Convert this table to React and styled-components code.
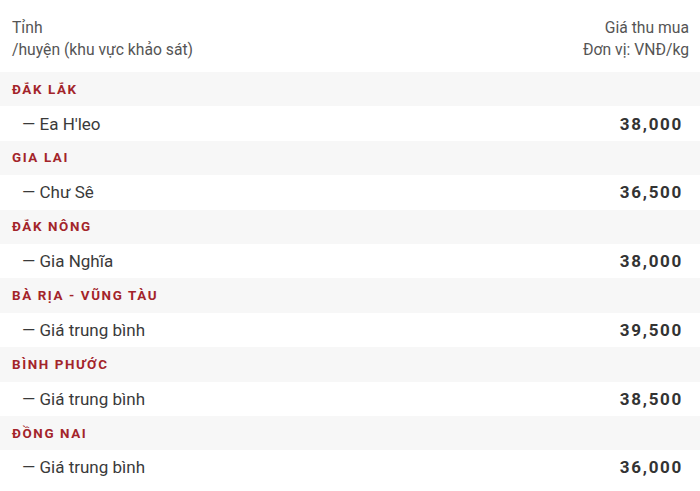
import styled, { createGlobalStyle } from "styled-components";

const GlobalStyle = createGlobalStyle`
  body {
    margin: 0;
    background: #fff;
    font-family: Roboto, "Liberation Sans", Arial, sans-serif;
  }
`;

const Table = styled.div`
  width: 700px;
`;

const Header = styled.div`
  display: flex;
  justify-content: space-between;
  align-items: flex-start;
  height: 72px;
  padding: 17px 11px 0 12px;
  box-sizing: border-box;
  font-size: 15.7px;
  line-height: 22px;
  color: #555;
`;

const HeaderCell = styled.div`
  text-align: ${(p) => (p.right ? "right" : "left")};
`;

const ProvinceRow = styled.div`
  display: flex;
  align-items: center;
  height: 34.4px;
  padding-left: 12px;
  background: #f7f7f7;
  color: #a3242a;
  font-size: 13.4px;
  font-weight: 700;
  letter-spacing: 1.6px;
`;

const ItemRow = styled.div`
  display: flex;
  justify-content: space-between;
  align-items: center;
  height: 34.4px;
  padding: 0 17px 0 22px;
  color: #3a3a3a;
  font-size: 17px;
`;

const Price = styled.span`
  font-weight: 700;
  font-size: 17px;
  letter-spacing: 1.7px;
  color: #333;
`;

const data = [
  { province: "ĐẮK LẮK", area: "Ea H'leo", price: "38,000" },
  { province: "GIA LAI", area: "Chư Sê", price: "36,500" },
  { province: "ĐẮK NÔNG", area: "Gia Nghĩa", price: "38,000" },
  { province: "BÀ RỊA - VŨNG TÀU", area: "Giá trung bình", price: "39,500" },
  { province: "BÌNH PHƯỚC", area: "Giá trung bình", price: "38,500" },
  { province: "ĐỒNG NAI", area: "Giá trung bình", price: "36,000" },
];

const App = () => {
  return (
    <>
      <GlobalStyle />
      <Table>
        <Header>
          <HeaderCell>
            Tỉnh
            <br />
            /huyện (khu vực khảo sát)
          </HeaderCell>
          <HeaderCell right>
            Giá thu mua
            <br />
            Đơn vị: VNĐ/kg
          </HeaderCell>
        </Header>
        {data.map((row) => (
          <div key={row.province}>
            <ProvinceRow>{row.province}</ProvinceRow>
            <ItemRow>
              <span>— {row.area}</span>
              <Price>{row.price}</Price>
            </ItemRow>
          </div>
        ))}
      </Table>
    </>
  );
};

export default App;
